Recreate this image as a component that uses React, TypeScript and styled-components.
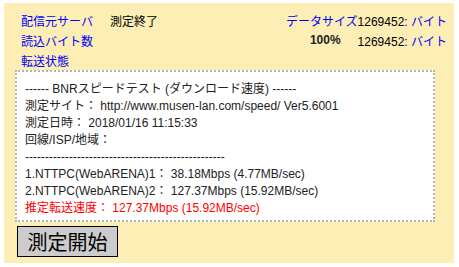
import React from "react";
import styled, { createGlobalStyle } from "styled-components";

const GlobalStyle = createGlobalStyle`
  html, body {
    margin: 0;
    padding: 0;
    background: #ffffff;
  }
  body {
    font-family: "Liberation Sans", Arial, "Noto Sans CJK JP", sans-serif;
    font-size: 12px;
  }
`;

const Panel = styled.div`
  margin: 3px 0 0 4px;
  width: 450px;
  height: 260px;
  box-sizing: border-box;
  background: #fdeeb5;
  padding: 7px 7px 0 11px;
`;

const Header = styled.div`
  display: flex;
  justify-content: space-between;
  padding-left: 6px;
  height: 60px;
`;

const StatusGrid = styled.div`
  display: grid;
  grid-template-columns: 89px auto;
  grid-auto-rows: 20px;
  align-items: center;
`;

const Label = styled.span<{ color?: string }>`
  color: ${({ color }) => color || "#0000ff"};
  white-space: nowrap;
`;

const Figures = styled.div`
  display: flex;
  flex-direction: column;
`;

const FigureRow = styled.div<{ gap?: number }>`
  display: flex;
  justify-content: flex-end;
  align-items: center;
  height: 20px;
  gap: ${({ gap }) => gap || 0}px;
  white-space: pre;
`;

const Percent = styled.span`
  font-weight: bold;
  color: #222;
`;

const Num = styled.span`
  color: #000;
`;

const Result = styled.div`
  width: 420px;
  height: 152px;
  box-sizing: border-box;
  background: #ffffff;
  border: 2px dotted #b4b4b4;
  padding: 9px 0 0 8px;
`;

const Line = styled.div<{ red?: boolean }>`
  height: 17px;
  line-height: 17px;
  white-space: pre;
  color: ${({ red }) => (red ? "#ff0000" : "#222")};
`;

const StartButton = styled.button`
  margin: 4px 0 0 2px;
  width: 101px;
  height: 31px;
  background: #cccccc;
  border: 1px solid #000;
  font-family: "Liberation Sans", "Noto Sans CJK JP", sans-serif;
  font-size: 20px;
  color: #000;
  padding: 0;
  cursor: pointer;
`;

const lines = [
  "------ BNRスピードテスト (ダウンロード速度) ------",
  "測定サイト： http://www.musen-lan.com/speed/ Ver5.6001",
  "測定日時： 2018/01/16 11:15:33",
  "回線/ISP/地域：",
  "--------------------------------------------------",
  "1.NTTPC(WebARENA)1： 38.18Mbps (4.77MB/sec)",
  "2.NTTPC(WebARENA)2： 127.37Mbps (15.92MB/sec)",
];

export default function App() {
  return (
    <>
      <GlobalStyle />
      <Panel>
        <Header>
          <StatusGrid>
            <Label>配信元サーバ</Label>
            <Label color="#000">測定終了</Label>
            <Label>読込バイト数</Label>
            <span />
            <Label>転送状態</Label>
            <span />
          </StatusGrid>
          <Figures>
            <FigureRow>
              <Label>データサイズ</Label>
              <span>
                <Num>1269452: </Num>
                <Label>バイト</Label>
              </span>
            </FigureRow>
            <FigureRow gap={17}>
              <Percent>100%</Percent>
              <span>
                <Num>1269452: </Num>
                <Label>バイト</Label>
              </span>
            </FigureRow>
          </Figures>
        </Header>
        <Result>
          {lines.map((l, i) => (
            <Line key={i}>{l}</Line>
          ))}
          <Line red>推定転送速度： 127.37Mbps (15.92MB/sec)</Line>
        </Result>
        <StartButton>測定開始</StartButton>
      </Panel>
    </>
  );
}
